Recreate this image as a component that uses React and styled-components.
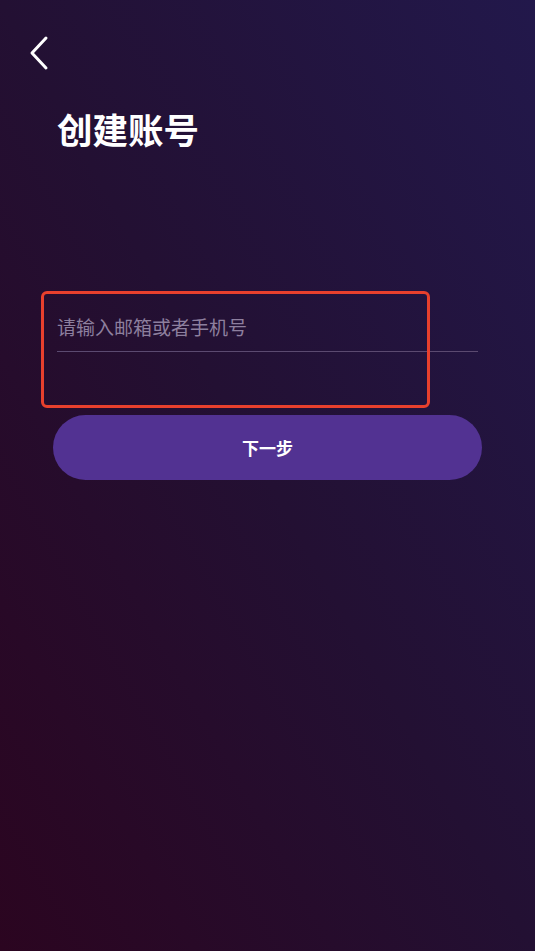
import React, { useState } from 'react';
import styled, { createGlobalStyle } from 'styled-components';

const GlobalStyle = createGlobalStyle`
  html, body {
    margin: 0;
    padding: 0;
  }
  body {
    font-family: "Noto Sans CJK SC", "Noto Sans", sans-serif;
    background: #221236;
  }
  * {
    box-sizing: border-box;
  }
`;

const Screen = styled.div`
  min-height: 951px;
  background: linear-gradient(to top right, #2b0520 0%, #231033 50%, #22184b 100%);
  display: flex;
  flex-direction: column;
`;

const TopBar = styled.div`
  height: 84px;
  padding: 33px 0 0 24px;
`;

const BackButton = styled.button`
  width: 30px;
  height: 40px;
  padding: 0;
  border: none;
  background: transparent;
  cursor: pointer;
  display: flex;
  align-items: center;
  justify-content: center;
`;

const Title = styled.h1`
  margin: 20px 0 0 57px;
  font-size: 35.5px;
  line-height: 50px;
  font-weight: 700;
  color: #ffffff;
`;

const Form = styled.form`
  margin-top: 148px;
  padding: 0 53px;
  display: flex;
  flex-direction: column;
`;

const FieldWrap = styled.div`
  position: relative;
  height: 113px;
  padding: 0 4px;
`;

const Highlight = styled.div`
  position: absolute;
  left: -12px;
  top: -11px;
  width: 389px;
  height: 117px;
  border: 3px solid #e8402d;
  border-radius: 6px;
  pointer-events: none;
`;

const Input = styled.input`
  width: 100%;
  height: 50px;
  padding: 0;
  border: none;
  border-bottom: 1.5px solid #5b4a70;
  background: transparent;
  color: #ffffff;
  font-family: "Noto Sans CJK SC", sans-serif;
  font-size: 19px;
  outline: none;

  &::placeholder {
    color: #8d7f9e;
  }
`;

const NextButton = styled.button`
  height: 65px;
  border: none;
  border-radius: 33px;
  background: #523292;
  color: #ffffff;
  font-family: "Noto Sans CJK SC", sans-serif;
  font-size: 17px;
  font-weight: 700;
  cursor: pointer;
`;

const App = () => {
  const [account, setAccount] = useState('');

  return (
    <Screen>
      <GlobalStyle />
      <TopBar>
        <BackButton type="button" aria-label="back">
          <svg width="22" height="36" viewBox="0 0 22 36" fill="none">
            <path d="M18 3 L4 18 L18 33" stroke="#ffffff" strokeWidth="3" strokeLinecap="round" strokeLinejoin="round" />
          </svg>
        </BackButton>
      </TopBar>

      <Title>创建账号</Title>

      <Form onSubmit={e => e.preventDefault()}>
        <FieldWrap>
          <Input
            value={account}
            onChange={e => setAccount(e.target.value)}
            placeholder="请输入邮箱或者手机号"
          />
          <Highlight />
        </FieldWrap>
        <NextButton type="submit">下一步</NextButton>
      </Form>
    </Screen>
  );
};

export default App;
